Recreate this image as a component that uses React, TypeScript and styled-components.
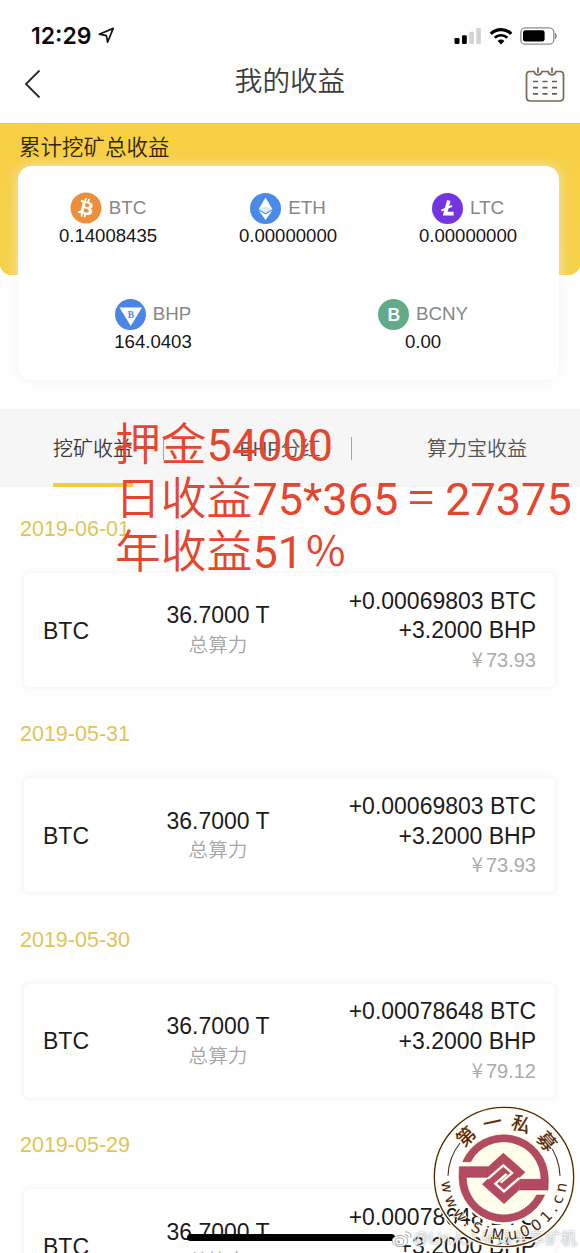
import type { ReactNode } from 'react'
import { FaBitcoin } from 'react-icons/fa'
import styled, { createGlobalStyle } from 'styled-components'

const records = [
  { date: '2019-06-01', btc: '+0.00069803 BTC', cny: '73.93' },
  { date: '2019-05-31', btc: '+0.00069803 BTC', cny: '73.93' },
  { date: '2019-05-30', btc: '+0.00078648 BTC', cny: '79.12' },
  { date: '2019-05-29', btc: '+0.00078648 BTC', cny: '79.12' },
]

const tabs = ['挖矿收益', 'BHP分红', '算力宝收益']

const EthIcon = () => (
  <svg width="31" height="31" viewBox="0 0 31 31">
    <circle cx="15.5" cy="15.5" r="15.5" fill="#4a8ae8" />
    <path d="M15.5 4.5 L22.3 16 L15.5 20 L8.8 16 Z" fill="#fff" />
    <path d="M8.8 17.6 L15.5 21.6 L22.3 17.6 L15.5 27 Z" fill="#fff" />
    <path d="M15.5 13.6 L22.3 16 L15.5 20 L8.8 16 Z" fill="#dbe7fa" />
  </svg>
)

const LtcIcon = () => (
  <svg width="31" height="31" viewBox="0 0 31 31">
    <circle cx="15.5" cy="15.5" r="15.5" fill="#7435e0" />
    <path d="M16.8 7.5 L13.2 20.6 H21.6" fill="none" stroke="#fff" strokeWidth="3.6" />
    <path d="M9.4 17.6 L20 12.8" stroke="#fff" strokeWidth="2" />
  </svg>
)

const BhpIcon = () => (
  <svg width="31" height="31" viewBox="0 0 31 31">
    <circle cx="15.5" cy="15.5" r="15.5" fill="#4b86e6" />
    <path d="M4.5 8.5 H27 L15.8 27 Z" fill="#fff" />
    <text x="15.8" y="18.6" textAnchor="middle" fontFamily="Liberation Serif, serif" fontWeight="700" fontSize="9.5" fill="#4b86e6">
      B
    </text>
  </svg>
)

const BcnyIcon = () => (
  <svg width="31" height="31" viewBox="0 0 31 31">
    <circle cx="15.5" cy="15.5" r="15.5" fill="#61ab88" />
    <text x="15.8" y="21.8" textAnchor="middle" fontFamily="Liberation Sans, sans-serif" fontWeight="700" fontSize="17.5" fill="#fff">
      B
    </text>
  </svg>
)

const LocationIcon = () => (
  <svg width="17" height="17" viewBox="0 0 17 17">
    <path d="M1.3 7.2 L15.2 1.4 L9.6 15.2 L8.4 8.6 Z" fill="none" stroke="#111" strokeWidth="1.7" strokeLinejoin="round" />
  </svg>
)

const SignalIcon = () => (
  <svg width="28" height="18" viewBox="0 0 28 18">
    <rect x="0.5" y="11" width="5" height="6" rx="1.2" fill="#000" />
    <rect x="8" y="8.3" width="4.8" height="8.7" rx="1.2" fill="#000" />
    <rect x="15.3" y="4.8" width="4.6" height="12.2" rx="1.2" fill="#d3d3d3" />
    <rect x="22.3" y="1" width="4.6" height="16" rx="1.2" fill="#d3d3d3" />
  </svg>
)

const WifiIcon = () => (
  <svg width="24" height="18" viewBox="0 0 24 18">
    <path d="M1.8 6.8 A14.6 14.6 0 0 1 22.2 6.8" fill="none" stroke="#000" strokeWidth="3.2" />
    <path d="M5.7 10.8 A9 9 0 0 1 18.3 10.8" fill="none" stroke="#000" strokeWidth="2.7" />
    <path d="M12 17.4 L8.6 14 A4.8 4.8 0 0 1 15.4 14 Z" fill="#000" />
  </svg>
)

const BatteryIcon = () => (
  <svg width="38" height="18" viewBox="0 0 38 18">
    <rect x="0.8" y="0.8" width="33" height="16.4" rx="4.5" fill="none" stroke="#8d8d8d" strokeWidth="1.3" />
    <rect x="3" y="3.2" width="21.6" height="11.4" rx="2.4" fill="#000" />
    <path d="M35.4 6 Q37.5 9 35.4 12 Z" fill="#8d8d8d" stroke="#8d8d8d" />
  </svg>
)

const BackIcon = () => (
  <BackSvg width="17" height="30" viewBox="0 0 17 30">
    <path d="M15.5 1.5 L2 15 L15.5 28.5" fill="none" stroke="#2c2c2c" strokeWidth="1.9" />
  </BackSvg>
)

const CalendarIcon = () => (
  <svg width="40" height="36" viewBox="0 0 40 36">
    <path
      d="M9 4.5 H5 Q1.5 4.5 1.5 8 V30 Q1.5 34 5.5 34 H34.5 Q38.5 34 38.5 30 V8 Q38.5 4.5 35 4.5 H31 Q30 8 27 8 Q24 8 23 4.5 H17 Q16 8 13 8 Q10 8 9 4.5 Z"
      fill="none"
      stroke="#77694f"
      strokeWidth="1.7"
    />
    <path d="M13 0.5 V6 M27 0.5 V6" stroke="#77694f" strokeWidth="1.7" />
    <path d="M8 14.5 h5 M17.5 14.5 h5 M27 14.5 h5 M8 20.7 h5 M17.5 20.7 h5 M27 20.7 h5 M8 26.9 h5 M17.5 26.9 h5 M27 26.9 h5" stroke="#6b5c50" strokeWidth="1.7" />
  </svg>
)

const WeiboIcon = () => (
  <svg width="22" height="18" viewBox="0 0 22 18">
    <ellipse cx="9" cy="11" rx="7.8" ry="5.6" fill="#fff" stroke="#a9a9a9" strokeWidth="1" />
    <ellipse cx="8.4" cy="11.4" rx="4.4" ry="3.5" fill="none" stroke="#a9a9a9" strokeWidth="1" />
    <circle cx="7.6" cy="11.8" r="1.4" fill="#a9a9a9" />
    <path d="M14 1.8 Q20.5 1.4 20 8 M14 4.8 Q17.4 4.6 17 7.6" fill="none" stroke="#b5b5b5" strokeWidth="1.3" />
  </svg>
)

const sealChars = [
  { char: '第', angle: -43 },
  { char: '一', angle: -12 },
  { char: '私', angle: 18 },
  { char: '募', angle: 50 },
]

const Seal = () => (
  <SealSvg viewBox="0 0 432 432">
    <defs>
      <path id="sealText" d="M 27 216 A 189 189 0 0 0 405 216" />
    </defs>
    <circle cx="216" cy="216" r="209" fill="none" stroke="#fffde9" strokeWidth="12" />
    <circle cx="216" cy="216" r="209" fill="none" stroke="#4b2a17" strokeWidth="4" />
    <circle cx="215" cy="220" r="139" fill="#fffeea" />
    <path d="M48 212 A168 168 0 0 1 84 114 M348 114 A168 168 0 0 1 384 212" fill="none" stroke="#4b2a17" strokeWidth="3.4" />
    {sealChars.map(({ char, angle }) => (
      <SealChar key={char} x="216" y="70" transform={`rotate(${angle} 216 216)`}>
        {char}
      </SealChar>
    ))}
    <SealUrl>
      <textPath href="#sealText" startOffset="14" textLength="560">
        www.SiMu001.cn
      </textPath>
    </SealUrl>
    <g fill="#b44a61" stroke="#8b3248" strokeWidth="1.5">
      <path d="M92 170 A134 134 0 0 1 349 223 L348 255 H262 L262 223 H327 A112 112 0 0 0 116 170 Z" />
      <path d="M338 270 A134 134 0 0 1 81 217 L82 185 H168 V217 H103 A112 112 0 0 0 314 270 Z" />
      <path d="M168 185 L214 143 L280 202 L258 223 H262 V255 L216 297 L150 238 L172 217 H168 Z" stroke="none" />
    </g>
    <g fill="none" stroke="#fffeea" strokeWidth="7">
      <path d="M168 221 L214 181 L240 204 L206 233" />
      <path d="M262 219 L216 259 L190 236 L224 207" />
    </g>
  </SealSvg>
)

type CoinProps = {
  icon: ReactNode
  name: string
  amount: string
}

const Coin = ({ icon, name, amount }: CoinProps) => (
  <CoinWrap>
    <CoinHead>
      {icon}
      {name}
    </CoinHead>
    <CoinAmount>{amount}</CoinAmount>
  </CoinWrap>
)

const App = () => (
  <Page>
    <GlobalStyle />
    <StatusBar>
      <Time>12:29</Time>
      <LocationIcon />
      <StatusIcons>
        <SignalIcon />
        <WifiIcon />
        <BatteryIcon />
      </StatusIcons>
    </StatusBar>
    <Header>
      <BackIcon />
      <Title>我的收益</Title>
      <CalendarIcon />
    </Header>

    <Summary>
      <SummaryTitle>累计挖矿总收益</SummaryTitle>
      <SummaryCard>
        <CoinRow>
          <Coin icon={<BtcIcon />} name="BTC" amount="0.14008435" />
          <Coin icon={<EthIcon />} name="ETH" amount="0.00000000" />
          <Coin icon={<LtcIcon />} name="LTC" amount="0.00000000" />
        </CoinRow>
        <CoinRow>
          <Coin icon={<BhpIcon />} name="BHP" amount="164.0403" />
          <Coin icon={<BcnyIcon />} name="BCNY" amount="0.00" />
        </CoinRow>
      </SummaryCard>
    </Summary>

    <TabBar>
      {tabs.map((tab, i) => (
        <Tab key={tab}>
          <TabLabel $active={i === 0}>{tab}</TabLabel>
          {i < tabs.length - 1 && <TabDivider />}
        </Tab>
      ))}
    </TabBar>

    {records.map(({ date, btc, cny }) => (
      <DayRecord key={date}>
        <RecordDate>{date}</RecordDate>
        <RecordCard>
          <RecordCoin>BTC</RecordCoin>
          <Power>
            36.7000 T<PowerLabel>总算力</PowerLabel>
          </Power>
          <Income>
            <span>{btc}</span>
            <span>+3.2000 BHP</span>
            <Cny>
              <Yen>¥</Yen>
              {cny}
            </Cny>
          </Income>
        </RecordCard>
      </DayRecord>
    ))}

    <Note>
      <div>
        押金<NoteNumber>54000</NoteNumber>
      </div>
      <div>
        日收益<NoteNumber>75*365</NoteNumber>
        <Equals>＝</Equals>
        <NoteNumber>27375</NoteNumber>
      </div>
      <div>
        年收益<NoteNumber>51</NoteNumber>
        <Percent>％</Percent>
      </div>
    </Note>
    <HomeIndicator />
    <Watermark>
      <WeiboIcon />
      @Lin人人矿场共享矿机
    </Watermark>
    <Seal />
  </Page>
)

export default App

const GlobalStyle = createGlobalStyle`
  body {
    margin: 0;
    background: #fefefe;
  }

  * {
    box-sizing: border-box;
  }

  svg {
    display: block;
    flex-shrink: 0;
  }
`

const Page = styled.div`
  position: relative;
  width: 580px;
  height: 1253px;
  overflow: hidden;
  background: #fefefe;
  color: #1c1c1c;
  font-family: 'Liberation Sans', 'Noto Sans CJK SC', sans-serif;
  white-space: nowrap;
`

const StatusBar = styled.div`
  display: flex;
  align-items: center;
  height: 46px;
  padding: 25px 22px 0 31px;
`

const Time = styled.div`
  width: 67px;
  color: #0c0c0c;
  font-family: Inter, sans-serif;
  font-size: 23px;
  font-weight: 600;
  line-height: 22px;
`

const StatusIcons = styled.div`
  display: flex;
  align-items: center;
  gap: 7px;
  margin-left: auto;
`

const Header = styled.div`
  display: flex;
  align-items: center;
  justify-content: space-between;
  height: 77px;
  padding: 0 15px 0 24px;
`

const BackSvg = styled.svg`
  margin-bottom: 2px;
`

const Title = styled.div`
  padding: 0 0 5px 14px;
  color: #3c3c3c;
  font-size: 27.6px;
  font-weight: 350;
  line-height: 36px;
`

const Summary = styled.div`
  height: 286px;
  padding: 11px 21px 0 18px;
  background: radial-gradient(circle at 12px 140px, #f6d14c 12px, transparent 12.5px) 0 0 / 12px 152px no-repeat,
    radial-gradient(circle at 0 140px, #f6d14c 12px, transparent 12.5px) 100% 0 / 12px 152px no-repeat,
    linear-gradient(#f7cf45, #f6d14c) 12px 0 / 556px 152px no-repeat,
    linear-gradient(#f7cf45, #f6d14c) 0 0 / 100% 140px no-repeat;
`

const SummaryTitle = styled.div`
  padding-left: 1px;
  color: #2f2508;
  font-size: 21.5px;
  font-weight: 350;
  line-height: 29px;
`

const SummaryCard = styled.div`
  display: flex;
  flex-direction: column;
  gap: 58px;
  height: 214px;
  margin-top: 3px;
  padding: 26.5px 1px 0 0;
  border-radius: 14px;
  background: #fff;
  box-shadow: 0 0 12px rgba(240, 240, 240, 0.75);
`

const CoinRow = styled.div`
  display: flex;
  height: 48px;
`

const CoinWrap = styled.div`
  display: flex;
  flex: 1;
  flex-direction: column;
  align-items: center;
`

const CoinHead = styled.div`
  display: flex;
  align-items: center;
  gap: 7px;
  height: 31px;
  color: #878787;
  font-size: 18.8px;
`

const BtcIcon = styled(FaBitcoin)`
  width: 32px;
  height: 32px;
  color: #ec8f3c;
`

const CoinAmount = styled.div`
  color: #161616;
  font-size: 18.6px;
  line-height: 24px;
`

const TabBar = styled.div`
  display: flex;
  justify-content: space-between;
  height: 78px;
  padding: 0 53px;
  background: #f6f6f6;
`

const Tab = styled.div`
  display: flex;
  align-items: center;
  gap: 30px;
`

const TabLabel = styled.div<{ $active: boolean }>`
  height: 78px;
  border-bottom: 4px solid ${({ $active }) => ($active ? '#f4cd3d' : 'transparent')};
  color: ${({ $active }) => ($active ? '#3c3c3c' : '#545454')};
  font-size: 20px;
  font-weight: 350;
  line-height: 80px;
`

const TabDivider = styled.div`
  width: 1px;
  height: 23px;
  background: #a5a5a5;
`

const DayRecord = styled.div`
  height: 205.4px;
  padding: 28px 25px 0 24px;
`

const RecordDate = styled.div`
  margin-left: -4px;
  color: #dfc557;
  font-size: 21.5px;
  line-height: 28px;
`

const RecordCard = styled.div`
  display: grid;
  grid-template-columns: 87px 176px 1fr;
  align-items: center;
  height: 114px;
  margin-top: 30px;
  padding: 2px 19px 0;
  border-radius: 5px;
  background: #fff;
  box-shadow: 0 0 5px 1px #f3f3f3;
  font-size: 23px;
  line-height: 29.6px;
`

const RecordCoin = styled.div`
  padding-top: 1px;
`

const Power = styled.div`
  text-align: center;
`

const PowerLabel = styled.div`
  color: #a6a6a6;
  font-size: 19.6px;
  font-weight: 350;
`

const Income = styled.div`
  display: flex;
  flex-direction: column;
  align-items: flex-end;
`

const Cny = styled.div`
  display: flex;
  align-items: baseline;
  gap: 3px;
  color: #ababab;
  font-size: 20px;
`

const Yen = styled.span`
  font-family: 'Noto Sans CJK SC', sans-serif;
  font-size: 21px;
  font-weight: 350;
  line-height: 20px;
`

const Note = styled.div`
  position: absolute;
  top: 419px;
  left: 115px;
  color: #e4472f;
  font-family: Roboto, 'Noto Sans CJK SC', sans-serif;
  font-size: 45.8px;
  font-weight: 350;
  line-height: 53.5px;
`

const NoteNumber = styled.span`
  font-size: 45px;
  font-weight: 400;
`

const Equals = styled.span`
  display: inline-block;
  width: 47px;
  transform: scaleX(0.66);
`

const Percent = styled.span`
  display: inline-block;
  font-weight: 400;
  transform: scale(0.93, 0.9);
`

const HomeIndicator = styled.div`
  position: absolute;
  top: 1234px;
  left: 187px;
  width: 208px;
  height: 7px;
  border-radius: 4px;
  background: #000;
`

const Watermark = styled.div`
  position: absolute;
  top: 1229px;
  left: 391px;
  display: flex;
  align-items: center;
  color: rgba(255, 255, 255, 0.85);
  font-size: 15.8px;
  line-height: 20px;
  text-shadow: 0 0 2px #888;
`

const SealSvg = styled.svg`
  position: absolute;
  top: 1105px;
  left: 432px;
  width: 144px;
  height: 144px;
`

const SealChar = styled.text`
  fill: #5a2c14;
  stroke: #fffde9;
  stroke-width: 5px;
  paint-order: stroke;
  font-family: 'Noto Sans CJK SC', sans-serif;
  font-size: 57px;
  font-weight: 500;
  text-anchor: middle;
`

const SealUrl = styled.text`
  fill: #4b2a17;
  stroke: #fffde9;
  stroke-width: 5px;
  paint-order: stroke;
  font-family: 'DejaVu Sans', sans-serif;
  font-size: 45px;
`
